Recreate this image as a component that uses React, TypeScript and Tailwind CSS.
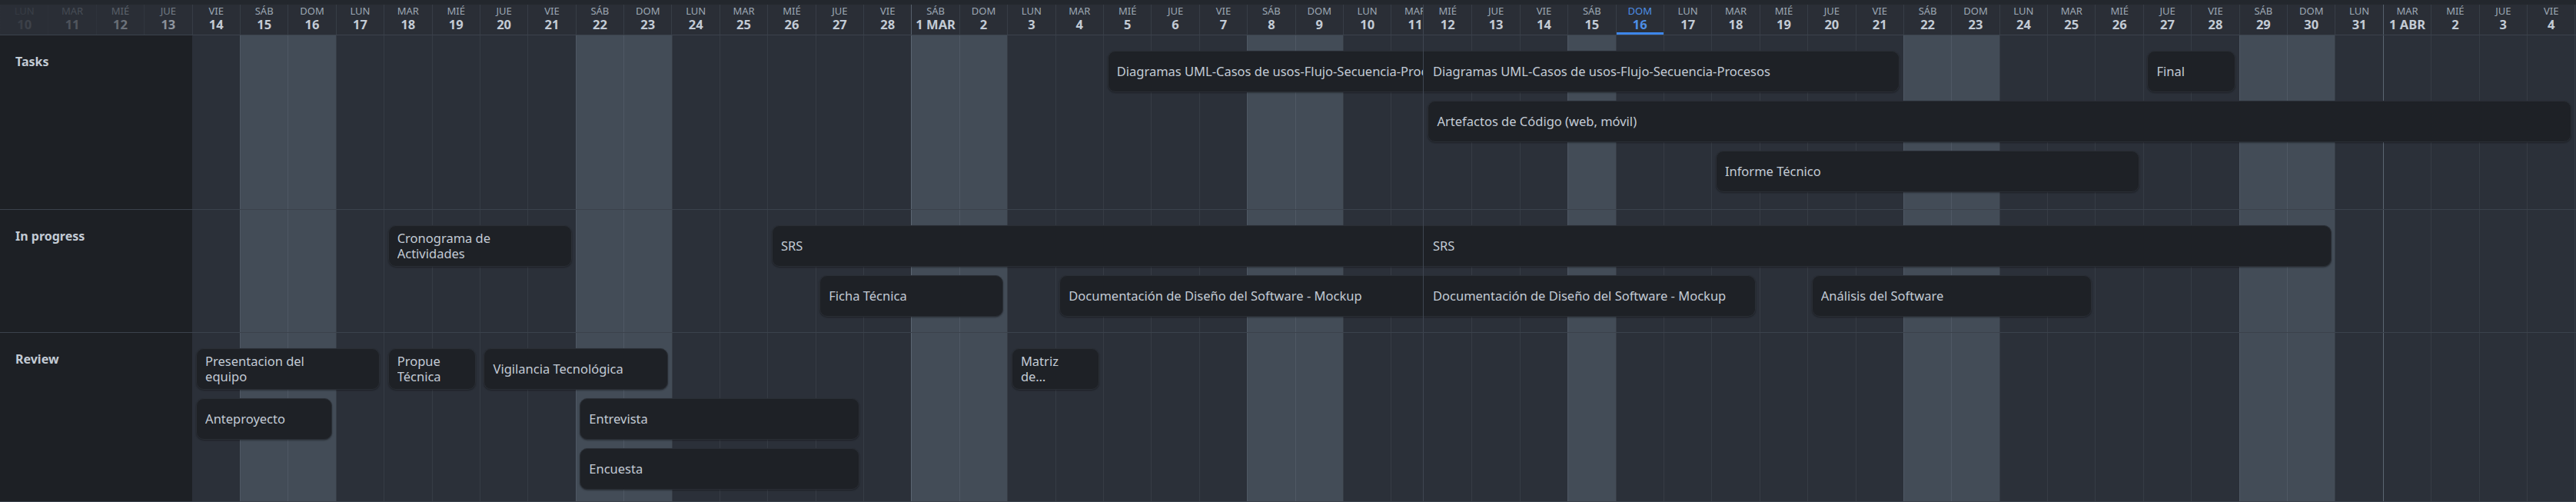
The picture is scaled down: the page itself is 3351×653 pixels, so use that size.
import React from 'react';

const COL = 62.4;
const NAMES = ['LUN', 'MAR', 'MIÉ', 'JUE', 'VIE', 'SÁB', 'DOM'];
const TODAY = 34;
const SEAM = 30; // first day index in the second segment
const LAST = 53;

const F = (d: number) => d - 10;
const M = (d: number) => 18 + d;
const A = (d: number) => 49 + d;

const range = (a: number, b: number) => Array.from({ length: b - a + 1 }, (_, k) => a + k);

function dayLabel(idx: number) {
  if (idx <= 18) return String(idx + 10);
  if (idx <= 49) {
    const d = idx - 18;
    return d === 1 ? '1 MAR' : String(d);
  }
  const d = idx - 49;
  return d === 1 ? '1 ABR' : String(d);
}
const isWeekend = (i: number) => i % 7 === 5 || i % 7 === 6;
const isMonthStart = (i: number) => i === 19 || i === 50;

type Bar = { title: string; start: number; end: number; lane: number };
type Row = { name: string; h: string; bars: Bar[] };

const ROWS: Row[] = [
  {
    name: 'Tasks',
    h: 'h-[227px] flex-none',
    bars: [
      { title: 'Diagramas UML-Casos de usos-Flujo-Secuencia-Procesos', start: M(5), end: M(21), lane: 0 },
      { title: 'Artefactos de Código (web, móvil)', start: M(12), end: A(4), lane: 1 },
      { title: 'Informe Técnico', start: M(18), end: M(26), lane: 2 },
      { title: 'Final', start: M(27), end: M(28), lane: 0 },
    ],
  },
  {
    name: 'In progress',
    h: 'h-[160px] flex-none',
    bars: [
      { title: 'Cronograma de Actividades', start: F(18), end: F(21), lane: 0 },
      { title: 'SRS', start: F(26), end: M(30), lane: 0 },
      { title: 'Ficha Técnica', start: F(27), end: M(2), lane: 1 },
      { title: 'Documentación de Diseño del Software - Mockup', start: M(4), end: M(18), lane: 1 },
      { title: 'Análisis del Software', start: M(20), end: M(25), lane: 1 },
    ],
  },
  {
    name: 'Review',
    h: 'flex-1',
    bars: [
      { title: 'Presentacion del equipo', start: F(14), end: F(17), lane: 0 },
      { title: 'Anteproyecto', start: F(14), end: F(16), lane: 1 },
      { title: 'Propuesta Técnica', start: F(18), end: F(19), lane: 0 },
      { title: 'Vigilancia Tecnológica', start: F(20), end: F(23), lane: 0 },
      { title: 'Entrevista', start: F(22), end: F(27), lane: 1 },
      { title: 'Encuesta', start: F(22), end: F(27), lane: 2 },
      { title: 'Matriz de Requerimientos', start: M(3), end: M(4), lane: 0 },
    ],
  },
];

function HeaderCell({ idx, noBorder }: { idx: number; noBorder?: boolean }) {
  const today = idx === TODAY;
  const border = noBorder ? '' : isMonthStart(idx) ? 'border-l border-[#56606c]' : 'border-l border-[#373d46]';
  return (
    <div className={`relative flex-none w-[62.4px] h-full flex flex-col items-center ${border}`}>
      <div className={`text-[13px] leading-[16px] ${today ? 'text-[#4d8fe6]' : 'text-[#9da8b4]'}`}>{NAMES[idx % 7]}</div>
      <div className={`text-[16.5px] leading-[19px] font-bold whitespace-nowrap ${today ? 'text-[#4d8fe6]' : 'text-[#c3cbd5]'}`}>
        {dayLabel(idx)}
      </div>
      {today && <div className="absolute left-0 right-0 bottom-0 h-[3px] bg-[#3d86ea]" />}
    </div>
  );
}

function BodyCol({ idx, noBorder }: { idx: number; noBorder?: boolean }) {
  const bg = isWeekend(idx) && idx !== TODAY ? 'bg-[#434c57]' : 'bg-[#2b3039]';
  const border = noBorder
    ? ''
    : isMonthStart(idx)
    ? 'border-l border-[#5b6571]'
    : isWeekend(idx) && idx !== TODAY
    ? 'border-l border-[#4f5864]'
    : 'border-l border-[#363c45]';
  return <div className={`flex-none w-[62.4px] h-full ${bg} ${border}`} />;
}

function BarEl({ bar, origin }: { bar: Bar; origin: number }) {
  const startCol = bar.start - origin;
  const cut = startCol < 0;
  const left = cut ? 0 : startCol * COL + 5.5;
  const right = (bar.end - origin + 1) * COL - 5;
  return (
    <div
      className={`absolute h-[54px] bg-[#1e2126] border border-[#2a2e35] shadow-[0_1px_2px_rgba(0,0,0,0.35)] flex items-center overflow-hidden ${
        cut ? 'rounded-r-[10px] border-l-0 pl-[12px] pr-[12px]' : 'rounded-[10px] pl-[11px] pr-[45px]'
      }`}
      style={{ left, width: right - left, top: 20 + bar.lane * 65 }}
    >
      <span
        className={`text-[16.5px] leading-[20px] text-[#c3cbd5] ${
          cut ? 'whitespace-nowrap overflow-hidden' : 'line-clamp-2 whitespace-normal'
        }`}
      >
        {bar.title}
      </span>
    </div>
  );
}

export default function App() {
  return (
    <div className="w-[3351px] h-[653px] overflow-hidden flex flex-col bg-[#2b3039] font-['Noto_Sans',sans-serif]">
      <div className="h-[6px] flex-none bg-[#23272d]" />
      <div className="relative h-[40px] flex-none flex bg-[#2a2e36] border-b border-[#3b424c]">
        <div className="w-[1851px] flex-none overflow-hidden flex">
          {range(0, 29).map((i) => (
            <HeaderCell key={i} idx={i} />
          ))}
        </div>
        <div className="flex-1 overflow-hidden flex border-l border-[#3f4651]">
          {range(SEAM, LAST).map((i) => (
            <HeaderCell key={i} idx={i} noBorder={i === SEAM} />
          ))}
          <div className="flex-1 border-l border-[#373d46]" />
        </div>
        <div className="absolute left-0 top-0 bottom-0 w-[249.6px] bg-linear-to-r from-[#2a2e36]/95 via-[#2a2e36]/70 to-[#2a2e36]/25" />
      </div>
      {ROWS.map((row) => (
        <div key={row.name} className={`${row.h} flex border-b border-[#3b424c]`}>
          <div className="w-[249.6px] flex-none bg-[#1d2025] pl-[20px] pt-[24px] text-[16px] leading-[20px] font-bold text-[#c3cbd5]">
            {row.name}
          </div>
          <div className="relative w-[1601.4px] flex-none overflow-hidden">
            <div className="flex h-full">
              {range(4, 29).map((i) => (
                <BodyCol key={i} idx={i} noBorder={i === 4} />
              ))}
            </div>
            {row.bars
              .filter((b) => b.start < SEAM)
              .map((b) => (
                <BarEl key={b.title} bar={b} origin={4} />
              ))}
          </div>
          <div className="relative flex-1 overflow-hidden border-l border-[#3f4651]">
            <div className="flex h-full">
              {range(SEAM, LAST).map((i) => (
                <BodyCol key={i} idx={i} noBorder={i === SEAM} />
              ))}
              <div className="flex-1 border-l border-[#363c45]" />
            </div>
            {row.bars
              .filter((b) => b.end >= SEAM)
              .map((b) => (
                <BarEl key={b.title} bar={b} origin={SEAM} />
              ))}
          </div>
        </div>
      ))}
    </div>
  );
}
